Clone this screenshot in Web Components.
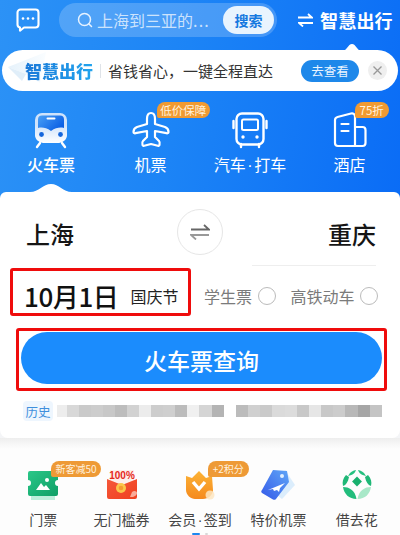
<!DOCTYPE html>
<html>
<head>
<meta charset="utf-8">
<style>
  html, body { margin: 0; padding: 0; background: #f4f5f7; overflow: hidden; }
  body { width: 400px; height: 535px; font-family: "Noto Sans CJK SC", "Noto Sans", sans-serif; }
</style>
</head>
<body>
<trip-app>
  <top-bar placeholder="上海到三亚的" brand="智慧出行"></top-bar>
  <promo-banner></promo-banner>
  <nav-tabs></nav-tabs>
  <search-card></search-card>
  <quick-links></quick-links>
</trip-app>

<script>
const FONT = '"Noto Sans CJK SC", "Noto Sans", sans-serif';

// the CJK font has a full width middle dot, the screenshot has a narrow one
const narrowDot = (text) => text.replace('·', '<span class="dot">·</span>');

class TripApp extends HTMLElement {
    constructor() {
        super();
        this.attachShadow({ mode: 'open' });
        this.shadowRoot.innerHTML = `
            <style>
                :host {
                    display: flex;
                    flex-direction: column;
                    height: 535px;
                    overflow: hidden;
                    font-family: ${FONT};
                    background: linear-gradient(100deg, #2c92f6 0%, #1c84f6 45%, #0a6cf6 100%) top / 100% 215px no-repeat, #f4f5f7;
                }
            </style>
            <slot></slot>
        `;
    }
}

class TopBar extends HTMLElement {
    constructor() {
        super();
        this.attachShadow({ mode: 'open' });
    }
    connectedCallback() {
        this.shadowRoot.innerHTML = `
            <style>
                :host { display: flex; align-items: center; height: 38px; padding: 2px 7px 0 16px; box-sizing: border-box; color: #fff; }
                .msg { width: 24px; height: 24px; flex: none; }
                .search {
                    display: flex; align-items: center; width: 218px; height: 34px; margin-left: 19px;
                    box-sizing: border-box; padding: 0 3px 0 18px; border-radius: 17px;
                    background: rgba(255,255,255,.2);
                }
                .search svg { width: 16px; height: 16px; flex: none; }
                .ph { margin-left: 4px; font-size: 16px; color: rgba(255,255,255,.72); flex: 1; white-space: nowrap; }
                .ph b { font-weight: 400; letter-spacing: 1.2px; }
                .btn {
                    width: 51px; height: 28px; border-radius: 14px; background: #e9f4fe; color: #1679e0;
                    font-size: 14px; font-weight: 700; display: flex; align-items: center; justify-content: center; flex: none;
                }
                .swap { width: 15px; height: 14px; margin-left: 21px; flex: none; }
                .brand { margin-left: 7px; font-size: 18px; font-weight: 700; white-space: nowrap; letter-spacing: .2px; }
            </style>
            <svg class="msg" viewBox="0 0 24 24" fill="none" stroke="#fff" stroke-width="2.1" stroke-linejoin="round">
                <path d="M4.500 1.500h15a3 3 0 0 1 3 3v12a3 3 0 0 1-3 3H8l-4 3.200v-3.200a3 3 0 0 1-2.500-3v-12a3 3 0 0 1 3-3z"/>
                <circle cx="7" cy="10.500" r="1.300" fill="#fff" stroke="none"/>
                <circle cx="12" cy="10.500" r="1.300" fill="#fff" stroke="none"/>
                <circle cx="17" cy="10.500" r="1.300" fill="#fff" stroke="none"/>
            </svg>
            <div class="search">
                <svg viewBox="0 0 16 16" fill="none" stroke="#e6f2ff" stroke-width="1.500" stroke-linecap="round">
                    <circle cx="7.500" cy="7.500" r="6"/><path d="M12 12l2.500 2.500"/>
                </svg>
                <span class="ph">${this.getAttribute('placeholder')}<b>...</b></span>
                <span class="btn">搜索</span>
            </div>
            <svg class="swap" viewBox="0 0 15 14" fill="none" stroke="#fff" stroke-width="1.800">
                <path d="M0 4.500h14L10 1"/><path d="M15 10H1l4 3.500"/>
            </svg>
            <span class="brand">${this.getAttribute('brand')}</span>
        `;
    }
}

class PromoBanner extends HTMLElement {
    constructor() {
        super();
        this.attachShadow({ mode: 'open' });
        this.shadowRoot.innerHTML = `
            <style>
                :host {
                    display: flex; align-items: center; position: relative; height: 41px; margin: 12px 2px 0;
                    border-radius: 20.500px; background: #fff;
                }
                .notch { position: absolute; left: 340px; top: -7px; width: 20px; height: 8px; }
                .plane { position: absolute; left: 4px; top: 1px; width: 48px; height: 36px; }
                .logo {
                    position: relative; margin-left: 23px; font-size: 17px; font-weight: 900; white-space: nowrap;
                    background: linear-gradient(90deg, #1a78d8, #22a4ee); -webkit-background-clip: text; background-clip: text; color: transparent;
                }
                .rule { width: 1px; height: 14px; margin-left: 7px; background: #dfe3e8; }
                .text { margin-left: 7px; font-size: 15px; color: #333; white-space: nowrap; }
                .go {
                    margin-left: 28px; width: 58px; height: 22px; border-radius: 11px; background: #1e88ea; color: #e9f4ff;
                    font-size: 12.500px; display: flex; align-items: center; justify-content: center; flex: none;
                }
                .close {
                    margin-left: 9px; width: 19px; height: 19px; border-radius: 50%; background: #efefef; flex: none;
                    display: flex; align-items: center; justify-content: center;
                }
                .close svg { width: 9px; height: 9px; }
            </style>
            <svg class="notch" viewBox="0 0 20 8"><path d="M0 8c5 0 6-7 10-7s5 7 10 7z" fill="#fff"/></svg>
            <svg class="plane" viewBox="0 0 48 36">
                <defs><linearGradient id="pl" x1="0" y1="0" x2="1" y2="0"><stop offset="0" stop-color="#e6f2fb"/><stop offset="1" stop-color="#fafdff"/></linearGradient></defs>
                <path d="M2 16L40 1 34 32 20 23z" fill="url(#pl)"/>
                <path d="M2 16l18 7-4 7z" fill="#e0eef9"/>
            </svg>
            <span class="logo">智慧出行</span>
            <span class="rule"></span>
            <span class="text">省钱省心，一键全程直达</span>
            <span class="go">去查看</span>
            <span class="close">
                <svg viewBox="0 0 9 9" stroke="#999" stroke-width="1.300"><path d="M.5.5l8 8M8.500.5l-8 8"/></svg>
            </span>
        `;
    }
}

class NavItem extends HTMLElement {
    constructor() {
        super();
        this.attachShadow({ mode: 'open' });
    }
    connectedCallback() {
        const tag = this.getAttribute('tag');
        const strong = this.hasAttribute('active');
        this.shadowRoot.innerHTML = `
            <style>
                :host { display: flex; flex-direction: column; align-items: center; position: relative; width: 99.5px; }
                .icon { width: 38px; height: 38px; display: flex; }
                .label { margin-top: 3px; font-size: 16px; line-height: 24px; color: #fff; white-space: nowrap; font-weight: ${strong ? 500 : 400}; }
                .dot { font-family: "Liberation Sans", sans-serif; margin: 0 1.500px; }
                .tag {
                    position: absolute; top: -9px; left: var(--tag-left, 50px); height: 16px; width: var(--tag-width); border-radius: 8px 8px 8px 2px;
                    background: #f09a32; color: #fff2df; font-size: 11.500px; line-height: 16px; white-space: nowrap; text-align: center;
                }
            </style>
            <div class="icon"><slot></slot></div>
            <div class="label">${narrowDot(this.getAttribute('label'))}</div>
            ${tag ? `<span class="tag">${tag}</span>` : ''}
        `;
    }
}

class NavTabs extends HTMLElement {
    constructor() {
        super();
        this.attachShadow({ mode: 'open' });
        this.shadowRoot.innerHTML = `
            <style>
                :host { display: flex; height: 81px; margin-top: 20px; padding-left: 1.250px; position: relative; }
                .notch { position: absolute; left: 30px; bottom: 0; width: 42px; height: 9px; z-index: 1; }
            </style>
            <nav-item label="火车票" active>
                <svg viewBox="0 0 38 38" style="width:38px;height:38px">
                    <defs>
                        <linearGradient id="tw" x1="0" y1="0" x2="0" y2="1"><stop offset=".4" stop-color="#cfe3fb"/><stop offset="1" stop-color="#fff"/></linearGradient>
                        <linearGradient id="tb" x1="0" y1="0" x2="1" y2="0.6"><stop offset="0" stop-color="#4aa0f6"/><stop offset="1" stop-color="#0a5fe4"/></linearGradient>
                    </defs>
                    <path d="M10 2h18a7 7 0 0 1 7 7v15c0 4-3 7-8 8H11c-5-1-8-4-8-8V9a7 7 0 0 1 7-7z" fill="url(#tw)"/>
                    <path d="M10 4.500h18a4 4 0 0 1 4 4v8.500c-4-1-8-.500-13 3-5-3.500-9-4-13-3V8.500a4 4 0 0 1 4-4z" fill="url(#tb)"/>
                    <rect x="14.500" y="6.500" width="9" height="2" rx="1" fill="#fff"/>
                    <circle cx="9.500" cy="23.500" r="2.400" fill="#1566dc"/><circle cx="28.500" cy="23.500" r="2.400" fill="#1566dc"/>
                    <path d="M8 32l-3 4M30 32l3 4" stroke="#fff" stroke-width="2.400" stroke-linecap="round"/>
                </svg>
            </nav-item>
            <nav-item label="机票" tag="低价保障" style="--tag-left:56px;--tag-width:53px">
                <svg viewBox="0 0 38 38" style="width:38px;height:38px" fill="none" stroke="#fff" stroke-width="2.200" stroke-linejoin="round">
                    <path d="M19 2c2.800 0 4 3 4 6v5l10 3c2.500 1 3.500 3 3.500 5 0 1-1 1.500-2 1.200L23 20v6l4 4c1 1 1 2 .5 4-.2.700-1 1-1.700.8L19 33l-6.800 1.800c-.7.200-1.500-.1-1.700-.8-.5-2-.5-3 .5-4l4-4v-6L3.500 22.200c-1 .3-2-.2-2-1.200 0-2 1-4 3.500-5l10-3V8c0-3 1.200-6 4-6z"/>
                </svg>
            </nav-item>
            <nav-item label="汽车·打车">
                <svg viewBox="0 0 38 38" style="width:38px;height:38px" fill="none" stroke="#fff" stroke-width="2.400" stroke-linejoin="round" stroke-linecap="round">
                    <rect x="5.500" y="2.500" width="27" height="31" rx="5.500"/>
                    <rect x="11" y="8.500" width="16" height="10.500" rx="1.500" stroke-width="2"/>
                    <path d="M2.500 10v7M35.500 10v7M10 33v3M28 33v3"/>
                    <circle cx="12" cy="26" r="1.700" fill="#fff" stroke="none"/><circle cx="26" cy="26" r="1.700" fill="#fff" stroke="none"/>
                </svg>
            </nav-item>
            <nav-item label="酒店" tag="75折" style="--tag-left:55px;--tag-width:34px">
                <svg viewBox="0 0 38 38" style="width:38px;height:38px" fill="none" stroke="#fff" stroke-width="2.200" stroke-linejoin="round" stroke-linecap="round">
                    <path d="M24 35H7a3 3 0 0 1-3-3V9c0-1.500 1-2.500 2.500-3L20 2.500c2-.5 4 .5 4 3v29.500h7.500a3 3 0 0 0 3-3V19c0-1.500-1-3-3-3H24"/>
                    <path d="M10.500 13h7M10.500 20h7"/>
                </svg>
            </nav-item>
            <svg class="notch" viewBox="0 0 42 9"><path d="M0 9c9 0 13-8 21-8s12 8 21 8z" fill="#fff"/></svg>
        `;
    }
}

class CheckOption extends HTMLElement {
    constructor() {
        super();
        this.attachShadow({ mode: 'open' });
    }
    connectedCallback() {
        this.shadowRoot.innerHTML = `
            <style>
                :host { display: flex; align-items: center; gap: 5.500px; color: #7b7b7b; font-size: 16px; white-space: nowrap; padding-top: 8px; }
                i { width: 18px; height: 18px; box-sizing: border-box; border: 1.500px solid #bbb; border-radius: 50%; display: block; }
            </style>
            <slot></slot><i></i>
        `;
    }
}

class HistoryMosaic extends HTMLElement {
    constructor() {
        super();
        this.attachShadow({ mode: 'open' });
    }
    connectedCallback() {
        // pixelated history row, one shade per block
        const shades = [
            ['#ededed', 9.5], ['#d8d8d8', 12.1], ['#cacaca', 12.1], ['#cdcdcd', 12.1], ['#c8c8c8', 12.1], ['#bdbdbd', 12.1], ['#d2d2d2', 12.1],
            ['#ececec', 12.1], ['#cdcdcd', 12.1], ['#cfcfcf', 12.1], ['#bcbcbc', 12.1], ['#f0f0f0', 12], ['#d5d5d5', 12.5], ['#b4b4b4', 12],
            ['transparent', 12], ['#bcbcbc', 12.17], ['#d0d0d0', 12.17], ['#cacaca', 12.17], ['#dadada', 12.17], ['#dcdcdc', 12.17], ['#c8c8c8', 12.17], ['#e6e6e6', 12.17],
            ['#c8c8c8', 12.17], ['#cccccc', 12.17], ['#b8b8b8', 12.17], ['#a6a6a6', 12.17], ['#c4c4c4', 12.17]
        ];
        this.shadowRoot.innerHTML = `
            <style>
                :host { display: flex; height: 12px; filter: blur(.5px); }
                span { display: block; height: 100%; flex: none; }
            </style>
            ${shades.map(([c, w]) => `<span style="background:${c};width:${w}px"></span>`).join('')}
        `;
    }
}

class SearchCard extends HTMLElement {
    constructor() {
        super();
        this.attachShadow({ mode: 'open' });
        this.shadowRoot.innerHTML = `
            <style>
                :host {
                    display: block; height: 246px; box-sizing: border-box; background: #fff; border-radius: 6px 6px 8px 8px;
                    position: relative; padding: 0 13px 0 16px;
                }
                .cities { display: flex; align-items: center; justify-content: space-between; height: 73px; padding: 7px 11px 0 10px; box-sizing: border-box; }
                .city { font-size: 24px; font-weight: 500; color: #151515; line-height: 1; width: 48px; white-space: nowrap; margin-top: 3px; }
                .exchange {
                    width: 46px; height: 46px; border-radius: 50%; box-sizing: border-box; border: 1px solid #e6e6e6;
                    display: flex; align-items: center; justify-content: center; margin-right: 2px;
                }
                .exchange svg { width: 20px; height: 16px; }
                .under { height: 1px; width: 124px; margin-left: 236px; background: #eeeeee; }
                .row { display: flex; align-items: center; height: 48px; margin: 2px 0 0 -6px; }
                .date {
                    width: 181px; height: 48px; box-sizing: border-box; border: 3px solid #ef0c0c; border-radius: 3px;
                    display: flex; align-items: center; padding: 7px 0 0 11px; flex: none;
                }
                .day { font-size: 26px; font-weight: 500; color: #111; white-space: nowrap; letter-spacing: -.4px; }
                .fest { margin-left: 12px; font-size: 16px; color: #222; white-space: nowrap; }
                check-option { flex: none; }
                .a { margin-left: 13px; }
                .b { margin-left: 15px; }
                .query { margin: 12px 0 0; box-sizing: border-box; height: 63px; border: 3px solid #ef0c0c; border-radius: 3px; padding: 1px 2px 0; }
                .query div {
                    height: 52px; box-sizing: border-box; border-radius: 26px; background: #1b8cfd; color: #fff; font-size: 23px; font-weight: 500;
                    display: flex; align-items: center; justify-content: center; padding: 3px 0 0 0;
                }
                .hist { display: flex; align-items: center; height: 20px; margin: 10px 0 0 7px; }
                .tag {
                    width: 30px; height: 20px; border-radius: 4px; background: #eef6fe; color: #3f8fdc; font-size: 12.500px;
                    display: flex; align-items: center; justify-content: center; flex: none;
                }
                history-mosaic { margin-left: 4px; }
            </style>
            <div class="cities">
                <span class="city">上海</span>
                <span class="exchange">
                    <svg viewBox="0 0 20 16" fill="none" stroke-width="1.800">
                        <path d="M1 5.500h18L14 1" stroke="#666"/><path d="M19 11H1l5 4.500" stroke="#999"/>
                    </svg>
                </span>
                <span class="city">重庆</span>
            </div>
            <div class="under"></div>
            <div class="row">
                <div class="date"><span class="day">10月1日</span><span class="fest">国庆节</span></div>
                <check-option class="a">学生票</check-option>
                <check-option class="b">高铁动车</check-option>
            </div>
            <div class="query"><div>火车票查询</div></div>
            <div class="hist"><span class="tag">历史</span><history-mosaic></history-mosaic></div>
        `;
    }
}

class QuickItem extends HTMLElement {
    constructor() {
        super();
        this.attachShadow({ mode: 'open' });
    }
    connectedCallback() {
        const tag = this.getAttribute('tag');
        this.shadowRoot.innerHTML = `
            <style>
                :host { display: flex; flex-direction: column; align-items: center; position: relative; }
                .icon { width: 34px; height: 32px; display: flex; }
                .label { margin-top: 8px; font-size: 14px; line-height: 20px; color: #444; white-space: nowrap; }
                .dot { font-family: "Liberation Sans", sans-serif; margin: 0 1.500px; }
                .tag {
                    position: absolute; top: -8px; left: 47px; height: 16px; width: var(--tag-width); border-radius: 8px 8px 8px 2px;
                    background: #ee9a36; color: #fff1de; font-size: 10px; line-height: 16px; white-space: nowrap; text-align: center; z-index: 1;
                }
            </style>
            <div class="icon"><slot></slot></div>
            <div class="label">${narrowDot(this.getAttribute('label'))}</div>
            ${tag ? `<span class="tag">${tag}</span>` : ''}
        `;
    }
}

class QuickLinks extends HTMLElement {
    constructor() {
        super();
        this.attachShadow({ mode: 'open' });
        this.shadowRoot.innerHTML = `
            <style>
                :host {
                    display: grid; grid-template-columns: repeat(5, 1fr); align-items: start; flex: 1; padding: 31px 4px 0; position: relative;
                    background: linear-gradient(#eeeeee, #f8f8f8 7px, #fdfdfd 11px);
                }
                svg { width: 34px; height: 32px; }
                .dots { position: absolute; left: 192px; bottom: 0; display: flex; gap: 5px; }
                .dots i { display: block; width: 8px; height: 2px; background: #1e88f0; border-radius: 1px; }
                .dots i + i { width: 3px; background: #d8d8d8; }
            </style>
            <quick-item label="门票" tag="新客减50" style="--tag-width:50px">
                <svg viewBox="0 0 34 32">
                    <defs><linearGradient id="g1" x1="0" y1="0" x2="1" y2="1"><stop offset="0" stop-color="#2ac788"/><stop offset="1" stop-color="#0f9f66"/></linearGradient></defs>
                    <path d="M5 27h24v4H5z" fill="#bdeedb"/>
                    <path d="M4 2h26a2 2 0 0 1 2 2v7a3 3 0 0 0 0 6v8a2 2 0 0 1-2 2H4a2 2 0 0 1-2-2v-8a3 3 0 0 0 0-6V4a2 2 0 0 1 2-2z" fill="url(#g1)"/>
                    <path d="M10 21l5-7 3 4 2-2 4 5z" fill="#fff"/><circle cx="21" cy="11" r="2" fill="#fff"/>
                </svg>
            </quick-item>
            <quick-item label="无门槛券">
                <svg viewBox="0 0 34 32">
                    <defs>
                        <linearGradient id="g2" x1="0" y1="0" x2="1" y2="1"><stop offset="0" stop-color="#f5583a"/><stop offset="1" stop-color="#f0401f"/></linearGradient>
                    </defs>
                    <path d="M5 1h24v16H5z" fill="#fdeeea"/>
                    <text x="17" y="10" text-anchor="middle" font-size="10" font-weight="900" fill="#e5281c" font-family="Liberation Sans, sans-serif">100%</text>
                    <path d="M2 10l15 6 15-6v18a2 2 0 0 1-2 2H4a2 2 0 0 1-2-2z" fill="url(#g2)"/>
                    <circle cx="16" cy="19" r="5" fill="#fbc54a"/><circle cx="16" cy="19" r="2.300" fill="#f79a2d"/>
                    <path d="M27 23c2-2 5-1 5 1s-2 3-4 4h-3z" fill="#fbc4b5" opacity=".8"/>
                </svg>
            </quick-item>
            <quick-item label="会员·签到" tag="+2积分" style="--tag-width:41px">
                <svg viewBox="0 0 34 32">
                    <defs><linearGradient id="g3" x1="0" y1="0" x2="0" y2="1"><stop offset="0" stop-color="#fcb336"/><stop offset="1" stop-color="#f58a1e"/></linearGradient></defs>
                    <path d="M3 7l6 2 7-7 7 7 6-2 1 14c0 5-5 9-10 9h-8C8 30 3 26 3 21z" fill="url(#g3)"/>
                    <path d="M10 13l6 7 6-7" fill="none" stroke="#fff" stroke-width="3.400"/>
                    <circle cx="27" cy="26" r="4.500" fill="#fde6c2" opacity=".85"/>
                </svg>
            </quick-item>
            <quick-item label="特价机票">
                <svg viewBox="0 0 34 32">
                    <defs><linearGradient id="g4" x1="0" y1="1" x2="1" y2="0"><stop offset="0" stop-color="#3559e8"/><stop offset="1" stop-color="#5fa6f7"/></linearGradient></defs>
                    <path d="M24 1l10 15-13 14-5-4z" fill="#cfe7fb" opacity=".75"/>
                    <path d="M12 1l14 1 2 11-13 17c-1 1-2 1-3 .5L1 24c-1-1-1-2 0-3z" fill="url(#g4)"/>
                    <circle cx="21" cy="7" r="2" fill="#dff0ff"/>
                    <path d="M7 21l17-7-5 5-1 4-2-2-3 1-1-2z" fill="#fff"/>
                </svg>
            </quick-item>
            <quick-item label="借去花">
                <svg viewBox="0 0 34 32">
                    <path d="M10 4c2-2 5-3 6-3-1 3-3 5-8 6z" fill="#25c07f"/>
                    <path d="M24 4c-2-2-5-3-6-3 1 3 3 5 8 6z" fill="#25c07f"/>
                    <path d="M6 6C3 9 2 13 3 17c3-1 5-4 6-9z" fill="#1fb877"/>
                    <path d="M28 6c3 3 4 7 3 11-3-1-5-4-6-9z" fill="#1fb877"/>
                    <rect x="13.500" y="9" width="7" height="7" fill="#18b06e" transform="rotate(45 17 12.500)"/>
                    <path d="M3 18c6 0 12 3 13.500 12C9 30 4 25 3 18z" fill="#22bd7c"/>
                    <path d="M31 18c-6 0-12 3-13.500 12 7.500 0 12.500-5 13.500-12z" fill="#a8e8c8"/>
                </svg>
            </quick-item>
            <div class="dots"><i></i><i></i></div>
        `;
    }
}

customElements.define('trip-app', TripApp);
customElements.define('top-bar', TopBar);
customElements.define('promo-banner', PromoBanner);
customElements.define('nav-item', NavItem);
customElements.define('nav-tabs', NavTabs);
customElements.define('check-option', CheckOption);
customElements.define('history-mosaic', HistoryMosaic);
customElements.define('search-card', SearchCard);
customElements.define('quick-item', QuickItem);
customElements.define('quick-links', QuickLinks);
</script>
</body>
</html>
